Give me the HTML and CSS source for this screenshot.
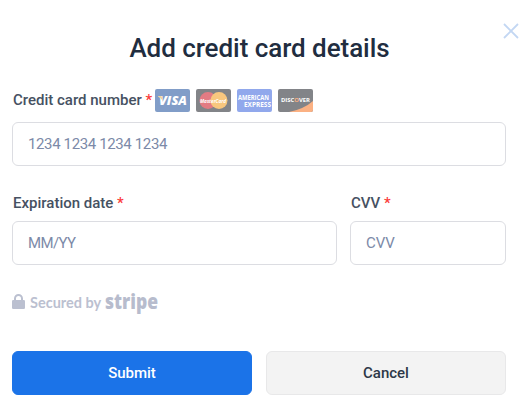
FILE: index.html
```
<!DOCTYPE html>
<html lang="en">
<head>
	<meta charset="UTF-8">
	<meta name="viewport" content="width=device-width, initial-scale=1">
	<title>Add credit card details</title>
	<link rel="stylesheet" href="styles.css">
</head>
<body>
	<form class="card-form">
		<button type="button" class="close" aria-label="Close">
			<svg width="16" height="16" viewBox="0 0 16 16"><path d="M1 1L15 15M15 1L1 15"/></svg>
		</button>
		<h1 class="title">Add credit card details</h1>

		<div class="field">
			<div class="label-row">
				<label class="label" for="number">Credit card number <span class="required">*</span></label>
				<div class="brands">
					<svg width="35" height="23" viewBox="0 0 35 23">
						<rect width="35" height="23" rx="2" fill="#819dc8"/>
						<text x="4" y="16" textLength="28" lengthAdjust="spacingAndGlyphs" class="visa">VISA</text>
						<path d="M3 7H6.500L8 12Q6 9 3 7.500Z" fill="#f0d49c"/>
					</svg>
					<svg width="35" height="23" viewBox="0 0 35 23">
						<rect width="35" height="23" rx="2" fill="#828488"/>
						<circle cx="12" cy="11.500" r="8.500" fill="#e37b83"/>
						<circle cx="23" cy="11.500" r="8.500" fill="#f8c77e"/>
						<text x="4" y="14" textLength="26" lengthAdjust="spacingAndGlyphs" class="mastercard">MasterCard</text>
					</svg>
					<svg width="35" height="23" viewBox="0 0 35 23">
						<rect width="35" height="23" rx="2" fill="#91a8ec"/>
						<text x="1" y="10.500" textLength="31" lengthAdjust="spacingAndGlyphs" class="amex">AMERICAN</text>
						<text x="7" y="17.500" textLength="27" lengthAdjust="spacingAndGlyphs" class="amex">EXPRESS</text>
					</svg>
					<svg width="35" height="23" viewBox="0 0 35 23">
						<rect width="35" height="23" rx="2" fill="#828488"/>
						<path d="M11 23Q26 20 35 12V21Q35 23 33 23Z" fill="#fbb183"/>
						<text x="3" y="12.500" textLength="29" lengthAdjust="spacingAndGlyphs" class="discover">DISC<tspan fill="#fbb183">O</tspan>VER</text>
					</svg>
				</div>
			</div>
			<input class="input number-input" id="number" type="text" placeholder="1234 1234 1234 1234">
		</div>

		<div class="row">
			<div class="field expiry">
				<div class="label-row">
					<label class="label" for="expiry">Expiration date <span class="required">*</span></label>
				</div>
				<input class="input expiry-input" id="expiry" type="text" placeholder="MM/YY">
			</div>
			<div class="field cvv">
				<div class="label-row">
					<label class="label" for="cvv">CVV <span class="required">*</span></label>
				</div>
				<input class="input" id="cvv" type="text" placeholder="CVV">
			</div>
		</div>

		<div class="secured">
			<svg class="lock" width="13" height="15" viewBox="0 0 13 15">
				<path d="M3 7V4.500a3.500 3.500 0 0 1 7 0V7" fill="none" stroke="#bbc0d0" stroke-width="2"/>
				<rect y="6" width="13" height="9" rx="1.300" fill="#bbc0d0"/>
			</svg>
			<span class="secured-text">Secured by</span>
			<svg class="stripe" width="54" height="28" viewBox="0 0 54 28">
				<text x="0" y="21" textLength="53" lengthAdjust="spacingAndGlyphs">stripe</text>
			</svg>
		</div>

		<div class="actions">
			<button type="button" class="btn submit">Submit</button>
			<button type="button" class="btn cancel">Cancel</button>
		</div>
	</form>
</body>
</html>
```
FILE: styles.css
```
* {
	box-sizing: border-box;
}
body {
	margin: 0;
	background: #fff;
	font-family: Roboto, sans-serif;
	color: #212d3f;
}
.card-form {
	position: relative;
	width: 506px;
	padding: 31px 0 0 12px;
}
.close {
	position: absolute;
	top: 23px;
	left: 503px;
	width: 16px;
	height: 16px;
	padding: 0;
	border: 0;
	background: none;
}
.close svg {
	display: block;
	fill: none;
	stroke: #c3d7f3;
	stroke-width: 1.8;
}
.title {
	margin: 0;
	padding-left: 1px;
	font-size: 26px;
	font-weight: 500;
	line-height: 34px;
	letter-spacing: -0.05px;
	text-align: center;
}
.field {
	display: flex;
	flex-direction: column;
}
.label-row {
	display: flex;
	align-items: center;
	height: 23px;
	padding-left: 1px;
	gap: 3px;
}
.card-form > .field {
	margin-top: 24px;
	gap: 10px;
}
.label {
	font-size: 15px;
	font-weight: 500;
	color: #465162;
	white-space: nowrap;
}
.card-form > .field .label {
	padding-bottom: 2px;
}
.required {
	color: #fb3b3b;
}
.brands {
	display: flex;
	gap: 6px;
}
.brands svg {
	display: block;
}
.brands text {
	fill: #fff;
	font-family: "Open Sans", sans-serif;
	font-weight: 700;
}
.brands .visa {
	font-size: 13px;
	font-style: italic;
	font-weight: 800;
}
.brands .mastercard {
	font-size: 6px;
	font-style: italic;
}
.brands .amex {
	font-size: 7px;
}
.brands .discover {
	font-size: 6px;
}
.input {
	width: 100%;
	height: 44px;
	padding: 0 15px;
	border: 1px solid #dcdde2;
	border-radius: 6px;
	background: #fff;
	font-family: Roboto, sans-serif;
	font-size: 15px;
}
.number-input {
	letter-spacing: -0.37px;
}
.expiry-input {
	letter-spacing: -0.6px;
}
.input::placeholder {
	color: #7c8aa8;
	opacity: 1;
}
.row {
	display: flex;
	gap: 13px;
	margin-top: 25px;
}
.row .field {
	gap: 7px;
}
.expiry {
	width: 325px;
}
.cvv {
	flex: 1;
}
.secured {
	display: flex;
	align-items: center;
	height: 28px;
	margin-top: 23px;
	color: #bbc0d0;
}
.lock {
	margin: 0 5px 1px 0;
}
.secured-text {
	width: 75px;
	font-family: Lato, sans-serif;
	font-size: 14.5px;
	font-weight: 700;
	white-space: nowrap;
}
.stripe {
	overflow: visible;
}
.stripe text {
	fill: #b7bccd;
	font-family: "Open Sans", sans-serif;
	font-size: 21px;
	font-weight: 800;
}
.actions {
	display: grid;
	grid-template-columns: 1fr 1fr;
	gap: 14px;
	margin-top: 35px;
}
.btn {
	height: 44px;
	padding: 0;
	border: 1px solid #1b73e8;
	border-radius: 6px;
	font-family: Roboto, sans-serif;
	font-size: 15px;
	font-weight: 500;
}
.submit {
	background: #1b73e8;
	color: #fff;
}
.cancel {
	border-color: #e8e8e9;
	background: #f3f3f3;
	color: #2d3848;
}
```
